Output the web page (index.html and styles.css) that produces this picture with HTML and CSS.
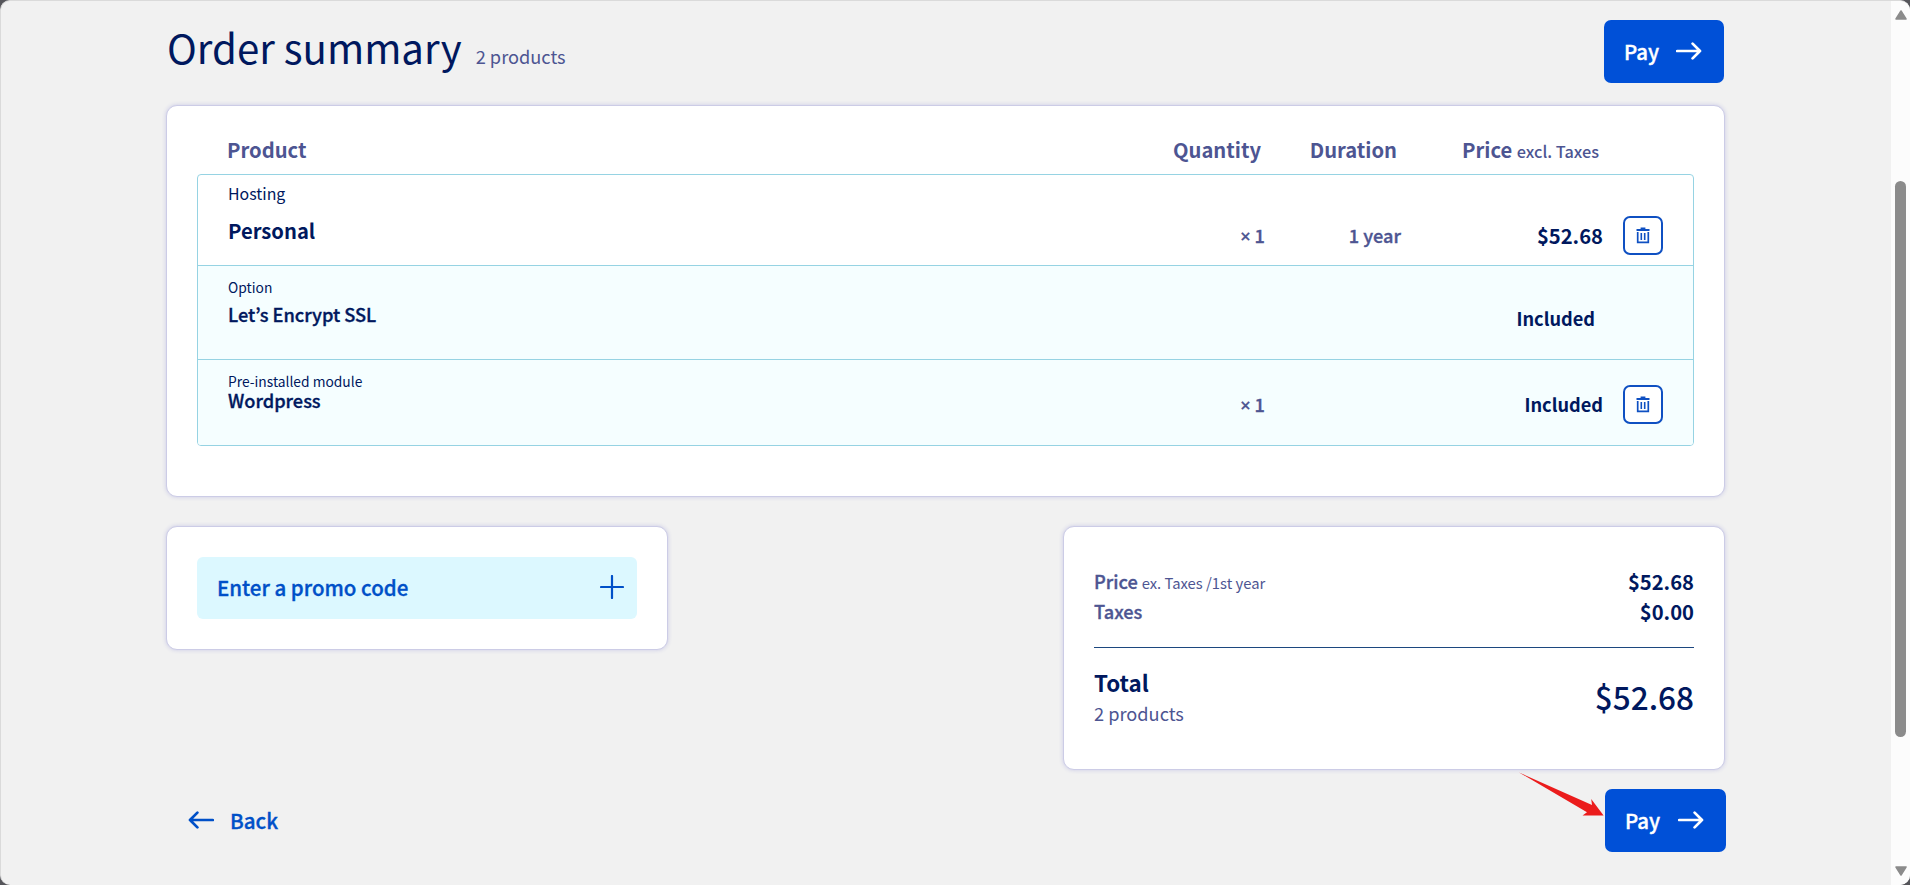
FILE: index.html
```html
<!doctype html>
<html lang="en">
<head>
<meta charset="utf-8">
<title>Order summary</title>
<link rel="stylesheet" href="styles.css">
</head>
<body>
<svg class="defs" width="0" height="0">
  <symbol id="arrow" viewBox="0 0 26 18">
    <path d="M1.2 9H24M16.6 1.6L24 9L16.6 16.4" fill="none" stroke="currentColor" stroke-width="2.7" stroke-linecap="round" stroke-linejoin="round"/>
  </symbol>
  <symbol id="trash" viewBox="0 0 14 17">
    <path d="M0.5 3H13.5M4.6 1.6H9.4" fill="none" stroke="currentColor" stroke-width="2"/>
    <path d="M1.7 5V15.3H12.3V5" fill="none" stroke="currentColor" stroke-width="1.7"/>
    <path d="M5.3 6V13M8.7 6V13" fill="none" stroke="currentColor" stroke-width="1.6"/>
  </symbol>
</svg>
<div class="window">
  <main class="page">
    <header class="top">
      <h1>Order summary</h1>
      <span class="count">2 products</span>
      <button class="pay">Pay <svg class="arrow"><use href="#arrow"/></svg></button>
    </header>

    <section class="card order">
      <div class="row head">
        <div class="product">Product</div>
        <div class="qty">Quantity</div>
        <div class="duration">Duration</div>
        <div class="price">Price <small>excl. Taxes</small></div>
      </div>
      <div class="items">
        <div class="row main">
          <div class="product">
            <div class="kind">Hosting</div>
            <div class="name">Personal</div>
          </div>
          <div class="qty"><span class="times">×</span> 1</div>
          <div class="duration">1 year</div>
          <div class="price">$52.68</div>
          <button class="remove"><svg class="trash"><use href="#trash"/></svg></button>
        </div>
        <div class="row option">
          <div class="product">
            <div class="kind">Option</div>
            <div class="name">Let’s Encrypt SSL</div>
          </div>
          <div class="price">Included</div>
        </div>
        <div class="row module">
          <div class="product">
            <div class="kind">Pre-installed module</div>
            <div class="name">Wordpress</div>
          </div>
          <div class="qty"><span class="times">×</span> 1</div>
          <div class="duration"></div>
          <div class="price">Included</div>
          <button class="remove"><svg class="trash"><use href="#trash"/></svg></button>
        </div>
      </div>
    </section>

    <div class="bottom">
      <section class="card promo">
        <button class="promo_btn">Enter a promo code
          <svg class="plus" viewBox="0 0 24 24"><path d="M1 12H23M12 1V23" stroke="currentColor" stroke-width="2.2" stroke-linecap="round"/></svg>
        </button>
      </section>
      <section class="card totals">
        <div class="line"><span>Price <small>ex. Taxes /1st year</small></span><b>$52.68</b></div>
        <div class="line"><span>Taxes</span><b>$0.00</b></div>
        <hr>
        <div class="total">
          <div>
            <div class="label">Total</div>
            <div class="count">2 products</div>
          </div>
          <div class="sum">$52.68</div>
        </div>
      </section>
    </div>

    <footer class="nav">
      <a class="back"><svg class="arrow left"><use href="#arrow"/></svg>Back</a>
      <button class="pay">Pay <svg class="arrow"><use href="#arrow"/></svg></button>
      <svg class="pointer" viewBox="0 0 85 45"><path d="M0 0.4L73 33L72.2 27L84.6 43.4L63.5 43.4L68 40.3Z" fill="#eb1c1c"/></svg>
    </footer>
  </main>

  <div class="scrollbar">
    <svg class="btn" viewBox="0 0 12 10"><path d="M6 1L11 9H1Z" fill="#8b8b8b" stroke="#8b8b8b" stroke-width="1.5" stroke-linejoin="round"/></svg>
    <div class="thumb"></div>
    <svg class="btn down" viewBox="0 0 12 10"><path d="M6 9L11 1H1Z" fill="#8b8b8b" stroke="#8b8b8b" stroke-width="1.5" stroke-linejoin="round"/></svg>
  </div>
</div>
</body>
</html>
```
FILE: styles.css
```css
* {
  box-sizing: border-box;
}
body {
  margin: 0;
  background: #55555a;
  color: #00185e;
  font-family: "Noto Sans CJK KR", "Noto Sans", sans-serif;
  overflow: hidden;
}
h1 {
  margin: 0;
}
button {
  font: inherit;
  color: inherit;
  border: 0;
  margin: 0;
  padding: 0;
}
.defs {
  display: block;
}

.window {
  height: 885px;
  display: flex;
  justify-content: space-between;
  background: #f1f1f1;
  border-top: 1px solid #dadada;
  border-left: 1px solid #dadada;
  border-radius: 10px;
  overflow: hidden;
}
.page {
  width: 1559px;
  margin-left: 165px;
}

.top {
  display: flex;
  height: 104px;
  padding: 19px 1px 0;
}
h1 {
  font-size: 40.2px;
  font-weight: 400;
  line-height: 54px;
  white-space: nowrap;
}
.count {
  color: #4d5592;
  font-size: 18.2px;
  line-height: 24px;
}
.top .count {
  margin: 24px auto 0 14px;
}

/* semibold */
.pay, .back, .promo_btn, .name, .qty, .duration, .line span {
  -webkit-text-stroke: 0.35px currentColor;
}
small, .head div, .main .name {
  -webkit-text-stroke: 0;
}

.pay {
  width: 120px;
  height: 63px;
  display: flex;
  align-items: center;
  justify-content: space-between;
  padding: 0 22px 2px 20px;
  background: #0050d7;
  color: #fff;
  border-radius: 7px;
  font-size: 20.4px;
  font-weight: 500;
}
.arrow {
  width: 26px;
  height: 18px;
}

.card {
  background: #fff;
  border: 1px solid #cccce6;
  border-radius: 11px;
  box-shadow: 0 0 4px #c9c9e6;
}

.order {
  height: 392px;
  padding: 29px 30px 0;
}
.row {
  display: flex;
  color: #4d5592;
}
.product {
  flex: 1;
}
.qty, .duration, .price {
  text-align: right;
  white-space: nowrap;
}
.duration {
  width: 136px;
}
.price {
  width: 202px;
}
.head {
  height: 39px;
  padding: 0 95px 0 30px;
  font-size: 20.2px;
  font-weight: 700;
  line-height: 29px;
}
.head small {
  font-size: 16.3px;
  font-weight: 500;
}
.items {
  border: 1px solid #96d3e3;
  border-radius: 4px;
  overflow: hidden;
}
.items .row {
  padding: 0 30px;
  font-size: 18.2px;
  font-weight: 500;
  line-height: 39px;
}
.items .row + .row {
  border-top: 1px solid #96d3e3;
  background: #f5feff;
}
.items .kind, .items .name, .items .price {
  color: #00185e;
}
.items .price {
  font-weight: 700;
}
.items .kind {
  font-size: 13.8px;
  font-weight: 400;
  line-height: 20px;
}
.times {
  font-family: "Noto Sans", sans-serif;
  line-height: 1;
}

.items .main {
  height: 90px;
}
.main .kind {
  margin-top: 7px;
  font-size: 15.9px;
  line-height: 24px;
}
.main .name {
  margin-top: 10px;
  font-size: 20.2px;
  font-weight: 700;
  line-height: 30px;
}
.main > * + * {
  margin-top: 41px;
}
.main .price {
  font-size: 20.2px;
}

.items .option {
  height: 94px;
  padding-right: 98px;
}
.option .kind {
  margin-top: 11px;
}
.option .name {
  margin-top: 4px;
  line-height: 26px;
}
.option .price {
  margin-top: 33px;
}

.items .module {
  height: 86px;
}
.module .kind {
  margin-top: 11px;
}
.module .name {
  line-height: 18px;
}
.module > * + * {
  margin-top: 25px;
}

.remove {
  width: 40px;
  height: 39px;
  margin-left: 20px;
  display: flex;
  align-items: center;
  justify-content: center;
  background: #fff;
  border: 2px solid #0f50c2;
  border-radius: 7px;
  color: #0f50c2;
}
.trash {
  width: 14px;
  height: 17px;
}

.bottom {
  display: flex;
  justify-content: space-between;
  align-items: flex-start;
  margin-top: 29px;
}
.promo {
  width: 502px;
  height: 124px;
  padding: 30px;
}
.promo_btn {
  width: 100%;
  height: 62px;
  display: flex;
  align-items: center;
  justify-content: space-between;
  padding: 0 13px 2px 20px;
  background: #dcf8ff;
  border-radius: 6px;
  color: #0050c8;
  font-size: 20.5px;
  font-weight: 500;
}
.plus {
  width: 24px;
  height: 24px;
}
.totals {
  width: 662px;
  height: 244px;
  padding: 40px 30px 0;
}
.line {
  display: flex;
  justify-content: space-between;
  height: 30px;
  color: #4d5592;
  font-size: 18.2px;
  font-weight: 500;
  line-height: 29px;
}
.line small {
  font-size: 14.8px;
  font-weight: 400;
  line-height: 1;
}
.line b {
  color: #00185e;
  font-size: 20.2px;
}
hr {
  height: 1px;
  margin: 20px 0 18px;
  border: 0;
  background: #1c477f;
}
.total {
  display: flex;
  justify-content: space-between;
}
.label {
  margin-bottom: 3px;
  font-size: 22.4px;
  font-weight: 700;
  line-height: 32px;
}
.sum {
  font-size: 31.5px;
  font-weight: 500;
  line-height: 61px;
}

.nav {
  position: relative;
  display: flex;
  justify-content: space-between;
  padding-top: 19px;
}
.back {
  display: flex;
  align-items: center;
  gap: 16px;
  padding: 0 0 2px 22px;
  color: #0050c8;
  font-size: 20.6px;
  font-weight: 500;
}
.left {
  transform: scaleX(-1);
}
.nav .pay {
  width: 121px;
  margin-right: -1px;
}
.pointer {
  position: absolute;
  left: 1353px;
  top: 2px;
  width: 85px;
  height: 45px;
}

.scrollbar {
  width: 19px;
  display: flex;
  flex-direction: column;
  align-items: center;
  padding: 9px 0;
  background: #fcfcfc;
}
.btn {
  width: 12px;
  height: 10px;
}
.thumb {
  width: 11px;
  height: 556px;
  margin-top: 161px;
  background: #8b8b8b;
  border-radius: 6px;
}
.down {
  margin-top: auto;
}
```
